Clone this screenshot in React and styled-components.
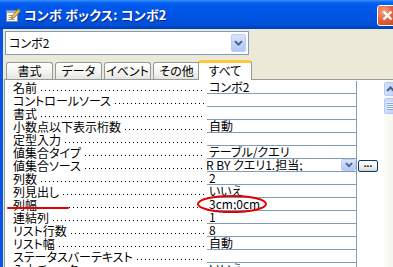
import React from "react";
import styled, { createGlobalStyle } from "styled-components";

const GlobalStyle = createGlobalStyle`
  html, body {
    margin: 0;
    padding: 0;
    background: #ece9d8;
    overflow: hidden;
  }
  * { box-sizing: border-box; }
`;

const FONT = `"Noto Sans CJK JP", "Noto Sans", sans-serif`;

const Window = styled.div`
  position: relative;
  width: 393px;
  height: 267px;
  overflow: hidden;
  display: flex;
  flex-direction: column;
  background: #ece9d8;
  font-family: ${FONT};
  font-size: 12px;
  color: #000;
`;

const TitleBar = styled.div`
  height: 29px;
  flex: none;
  display: flex;
  align-items: center;
  padding-left: 5px;
  background: linear-gradient(
    #3d95ff 0%,
    #0a66f2 8%,
    #0058ee 20%,
    #0054e3 55%,
    #0050d8 85%,
    #003dbb 100%
  );
`;

const TitleText = styled.span`
  margin-left: 3px;
  color: #fff;
  font-weight: 700;
  font-size: 13px;
  letter-spacing: 0.2px;
  text-shadow: 1px 1px 0 #0a1e8c;
  font-feature-settings: "palt";
  line-height: 1;
`;

const CloseButton = styled.div`
  margin-left: auto;
  margin-right: -5px;
  margin-top: 1px;
  width: 21px;
  height: 21px;
  border: 1px solid #fff;
  border-radius: 3px;
  background: radial-gradient(circle at 30% 30%, #f4a58a 0%, #e2653f 45%, #c33d17 100%);
  display: flex;
  align-items: center;
  justify-content: center;
`;

const Client = styled.div`
  flex: 1;
  display: flex;
  flex-direction: column;
  border-left: 3px solid #0a55e4;
  padding: 2px 0 0 2px;
  min-height: 0;
`;

const Combo = styled.div`
  width: 244px;
  height: 24px;
  background: #fff;
  border: 1px solid #7f9db9;
  display: flex;
  align-items: center;
  padding-left: 3px;
  padding-right: 2px;
  line-height: 1;
`;

const ComboText = styled.span`
  flex: 1;
  font-feature-settings: "palt";
`;

const DropButton = styled.div`
  width: ${p => p.$w}px;
  height: ${p => p.$h}px;
  border: 1px solid #b9cdf6;
  border-radius: 2px;
  background: linear-gradient(#d9e5fd, #c0d2fa 60%, #b3c8f5);
  display: flex;
  align-items: center;
  justify-content: center;
  flex: none;
`;

const TabStrip = styled.div`
  display: flex;
  align-items: flex-end;
  gap: 2px;
  margin-top: 5px;
  margin-left: 1px;
  height: 19px;
  position: relative;
  z-index: 1;
`;

const Tab = styled.div`
  width: ${p => (p.$active ? 54 : 47)}px;
  height: ${p => (p.$active ? 20 : 17)}px;
  margin-left: ${p => (p.$active ? -4 : 0)}px;
  margin-bottom: ${p => (p.$active ? -1 : 0)}px;
  border: 1px solid #919b9c;
  border-bottom: none;
  border-top: ${p => (p.$active ? "3px solid #ffc83c" : "1px solid #919b9c")};
  border-radius: 3px 3px 0 0;
  background: ${p =>
    p.$active ? "#fff" : "linear-gradient(#ffffff, #f3f3ef 60%, #e6e4dc)"};
  display: flex;
  align-items: center;
  justify-content: center;
  padding-bottom: ${p => (p.$active ? 1 : 0)}px;
  line-height: 1;
  font-feature-settings: "palt";
`;

const Panel = styled.div`
  flex: 1;
  display: flex;
  margin-left: -1px;
  background: #fff;
  border-top: 1px solid #919b9c;
  border-left: 1px solid #919b9c;
  min-height: 0;
`;

const Sheet = styled.div`
  width: 376px;
  flex: none;
  display: flex;
  flex-direction: column;
`;

const Row = styled.div`
  display: grid;
  grid-template-columns: 202px 150px 24px;
  height: 13px;
  flex: none;
`;

const Label = styled.div`
  display: flex;
  align-items: center;
  padding-left: 8px;
  padding-right: 2px;
  line-height: 13px;
  white-space: nowrap;
  overflow: hidden;
  font-feature-settings: "palt";
`;

const Leader = styled.span`
  flex: 1;
  align-self: stretch;
  margin-left: 3px;
  background-image: linear-gradient(to right, #000 1px, transparent 1px);
  background-size: 4px 1px;
  background-repeat: repeat-x;
  background-position: 1px calc(100% - 3px);
`;

const Value = styled.div`
  display: flex;
  align-items: center;
  border-bottom: 1px solid #7f9db9;
  border-right: 1px solid #7f9db9;
  padding-left: 2px;
  line-height: 12px;
  white-space: nowrap;
  overflow: hidden;
  font-feature-settings: "palt";
`;

const ValueText = styled.span`
  flex: 1;
  overflow: hidden;
  margin-left: ${p => p.$shift || 0}px;
`;

const Extra = styled.div`
  display: flex;
  align-items: center;
  padding-left: 1px;
`;

const DotsButton = styled.div`
  width: 20px;
  height: 12px;
  border: 1px solid #003c74;
  border-radius: 2px;
  background: linear-gradient(#ffffff, #ecebe6 70%, #d6d0c5);
  display: flex;
  align-items: center;
  justify-content: center;
  font-weight: 700;
  font-size: 10px;
  line-height: 1;
  padding-bottom: 3px;
  font-family: "Liberation Sans", sans-serif;
`;

const ScrollBar = styled.div`
  width: 17px;
  flex: none;
  margin-left: 3px;
  padding-top: 2px;
  display: flex;
  flex-direction: column;
  gap: 2px;
  background: linear-gradient(to right, #fbfbf8, #f2f1ea);
`;

const ScrollButton = styled.div`
  height: ${p => p.$h}px;
  border: 1px solid #b4c8f6;
  border-radius: 2px;
  background: linear-gradient(to right, #d4e1fd, #bfd1fa 60%, #b0c6f5);
  display: flex;
  align-items: center;
  justify-content: center;
  padding-right: 4px;
`;

const Grip = styled.div`
  width: 8px;
  height: 8px;
  background: repeating-linear-gradient(#eef3fe 0 1px, #8ca6df 1px 2px);
`;

const RedUnderline = styled.div`
  position: absolute;
  left: 7px;
  top: 207px;
  width: 62px;
  height: 2px;
  background: #e60000;
  border-radius: 1px;
`;

const Ellipse = styled.svg`
  position: absolute;
  left: 196px;
  top: 194px;
`;

function FormIcon() {
  return (
    <svg width="16" height="16" viewBox="0 0 16 16">
      <rect x="1.5" y="3.5" width="11" height="11" fill="#fff" stroke="#7a8aa6" />
      <rect x="2" y="4" width="10" height="2" fill="#9fb1cf" />
      <path d="M3.5 8.5h6M3.5 10.5h6M3.5 12.5h6" stroke="#8d98ab" />
      <path d="M7 9 L13 2.5 L15 4.5 L9 11 L6.5 11.5 Z" fill="#f4c24b" stroke="#9a6a10" strokeWidth="0.8" />
      <path d="M13 2.5 L14 1.5 L15.8 3.3 L15 4.5 Z" fill="#6bb24a" />
    </svg>
  );
}

function Chevron({ size = 9, color = "#4d6185" }) {
  return (
    <svg width={size} height={size * 0.7} viewBox="0 0 9 6">
      <path d="M1 1 L4.5 4.5 L8 1" fill="none" stroke={color} strokeWidth="2" />
    </svg>
  );
}

const rows = [
  ["名前", "コンボ2"],
  ["コントロールソース", ""],
  ["書式", ""],
  ["小数点以下表示桁数", "自動"],
  ["定型入力", ""],
  ["値集合タイプ", "テーブル/クエリ"],
  ["値集合ソース", "R BY クエリ1.担当;", "combo"],
  ["列数", "2"],
  ["列見出し", "いいえ"],
  ["列幅", "3cm;0cm"],
  ["連結列", "1"],
  ["リスト行数", "8"],
  ["リスト幅", "自動"],
  ["ステータスバーテキスト", ""],
  ["入力チェック", "いいえ"],
];

const tabs = ["書式", "データ", "イベント", "その他", "すべて"];

export default function App() {
  return (
    <>
      <GlobalStyle />
      <Window>
        <TitleBar>
          <FormIcon />
          <TitleText>コンボ ボックス: コンボ2</TitleText>
          <CloseButton>
            <svg width="13" height="13" viewBox="0 0 13 13">
              <path d="M2.5 2.5 L10.5 10.5 M10.5 2.5 L2.5 10.5" stroke="#fff" strokeWidth="2.4" />
            </svg>
          </CloseButton>
        </TitleBar>
        <Client>
          <Combo>
            <ComboText>コンボ2</ComboText>
            <DropButton $w={15} $h={18}>
              <Chevron />
            </DropButton>
          </Combo>
          <TabStrip>
            {tabs.map((t, i) => (
              <Tab key={t} $active={i === tabs.length - 1}>
                {t}
              </Tab>
            ))}
          </TabStrip>
          <Panel>
            <Sheet>
              <Row style={{ height: 1 }} />
              {rows.map(([label, value, kind]) => (
                <Row key={label}>
                  <Label>
                    {label}
                    <Leader />
                  </Label>
                  <Value>
                    <ValueText $shift={kind === "combo" ? -3 : 0}>{value}</ValueText>
                    {kind === "combo" && (
                      <DropButton $w={15} $h={12}>
                        <Chevron size={8} />
                      </DropButton>
                    )}
                  </Value>
                  <Extra>{kind === "combo" && <DotsButton>...</DotsButton>}</Extra>
                </Row>
              ))}
            </Sheet>
            <ScrollBar>
              <ScrollButton $h={14}>
                <svg width="9" height="6" viewBox="0 0 9 6">
                  <path d="M1 5 L4.5 1.5 L8 5" fill="none" stroke="#4d6185" strokeWidth="2" />
                </svg>
              </ScrollButton>
              <ScrollButton $h={16}>
                <Grip />
              </ScrollButton>
            </ScrollBar>
          </Panel>
        </Client>
        <RedUnderline />
        <Ellipse width="72" height="20" viewBox="0 0 72 20">
          <ellipse cx="36" cy="10" rx="34" ry="8" fill="none" stroke="#e60000" strokeWidth="2" />
        </Ellipse>
      </Window>
    </>
  );
}
